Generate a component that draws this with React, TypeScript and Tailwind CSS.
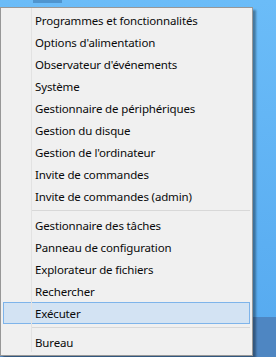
const groups: string[][] = [
  [
    "Programmes et fonctionnalités",
    "Options d'alimentation",
    "Observateur d'événements",
    "Système",
    "Gestionnaire de périphériques",
    "Gestion du disque",
    "Gestion de l'ordinateur",
    "Invite de commandes",
    "Invite de commandes (admin)",
  ],
  [
    "Gestionnaire des tâches",
    "Panneau de configuration",
    "Explorateur de fichiers",
    "Rechercher",
    "Exécuter",
  ],
  ["Bureau"],
];

const MenuItem = ({ label, active }: { label: string; active?: boolean }) => (
  <div
    className={
      active
        ? "h-[22px] mx-[2px] flex items-center pl-[31px] border border-[#7eb4ea] bg-[#d3e3f3]"
        : "h-[22px] mx-[2px] flex items-center pl-[31px] border border-transparent"
    }
  >
    <span className="text-[11.5px] tracking-[-0.15px] text-[#0a0a0a] leading-none pt-[1px]">{label}</span>
  </div>
);

export default function App() {
  return (
    <div
      className="relative w-[276px] h-[357px] overflow-hidden bg-gradient-to-b from-[#6bbcf8] to-[#55a9ef]"
      style={{ fontFamily: '"Noto Sans", "Open Sans", sans-serif' }}
    >
      {/* taskbar */}
      <div className="absolute left-0 right-0 bottom-0 h-[40px] bg-[#4e86c2]" />
      <div className="absolute left-[33px] top-0 w-[29px] h-[3px] bg-[#4f95cf]" />

      {/* context menu */}
      <div className="relative mt-[7px] w-[253px] h-[349px] bg-[#f0f0f0] border border-[#979797] shadow-[3px_3px_2px_rgba(0,0,0,0.35)] py-[1px]">
        <div className="absolute left-[30px] top-0 bottom-[3px] w-px bg-[#e2e2e2]" />
        {groups.map((group, gi) => (
          <div key={gi}>
            {gi > 0 && (
              <div className="h-[7px] flex items-center pl-[30px] pr-[2px]">
                <div className="h-px w-full bg-[#d8d8d8]" />
              </div>
            )}
            {group.map((label) => (
              <MenuItem key={label} label={label} active={label === "Exécuter"} />
            ))}
          </div>
        ))}
      </div>
    </div>
  );
}
